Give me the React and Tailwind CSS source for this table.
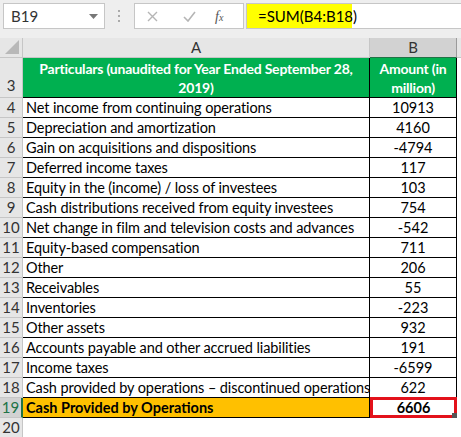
const rows = [
  [4, 'Net income from continuing operations', '10913'],
  [5, 'Depreciation and amortization', '4160'],
  [6, 'Gain on acquisitions and dispositions', '-4794'],
  [7, 'Deferred income taxes', '117'],
  [8, 'Equity in the (income) / loss of investees', '103'],
  [9, 'Cash distributions received from equity investees', '754'],
  [10, 'Net change in film and television costs and advances', '-542'],
  [11, 'Equity-based compensation', '711'],
  [12, 'Other', '206'],
  [13, 'Receivables', '55'],
  [14, 'Inventories', '-223'],
  [15, 'Other assets', '932'],
  [16, 'Accounts payable and other accrued liabilities', '191'],
  [17, 'Income taxes', '-6599'],
  [18, 'Cash provided by operations \u2013 discontinued operations', '622'],
];

const App = () => {
  return (
    <div
      className="w-[461px] h-[437px] overflow-hidden bg-white text-[14.5px] text-black"
      style={{ fontFamily: 'Lato, "Open Sans", sans-serif' }}
    >
      {/* formula bar */}
      <div className="h-[38px] bg-[#eeeeee] flex items-start pt-[3px]">
        <div className="ml-[3px] w-[102px] h-[26px] bg-white border border-[#c6c6c6] flex items-center justify-between pl-[7px] pr-[6px]">
          <span className="text-[15px] text-[#333]">B19</span>
          <svg width="9" height="5" viewBox="0 0 9 5"><path d="M0 0h9L4.5 5z" fill="#777" /></svg>
        </div>
        <div className="ml-[13px] mt-[7px] flex flex-col gap-[3px]">
          <div className="w-[2px] h-[2px] bg-[#aaa]" />
          <div className="w-[2px] h-[2px] bg-[#aaa]" />
          <div className="w-[2px] h-[2px] bg-[#aaa]" />
        </div>
        <div className="ml-[14px] w-[110px] h-[26px] bg-white border border-[#c6c6c6] flex items-center">
          <svg className="ml-[12px]" width="11" height="11" viewBox="0 0 11 11"><path d="M1 1l9 9M10 1l-9 9" stroke="#b5b5b5" strokeWidth="1.4" /></svg>
          <svg className="ml-[25px]" width="13" height="11" viewBox="0 0 13 11"><path d="M1 6l4 4 7-9" stroke="#b5b5b5" strokeWidth="1.6" fill="none" /></svg>
          <span className="ml-[19px] italic text-[14px] text-[#555]" style={{ fontFamily: '"Liberation Serif", serif' }}>f<span className="text-[10px]">x</span></span>
        </div>
        <div className="ml-[2px] flex-1 h-[26px] bg-white border border-[#c6c6c6] border-r-0 flex">
          <div className="w-[105px] h-full bg-[#ffff00] pl-[11px] flex items-center text-[15px]">=SUM(B4:B18)</div>
        </div>
      </div>

      {/* column headers */}
      <div className="flex h-[20px] bg-[#e6e6e6] text-[15px] text-[#333]">
        <div className="w-[23px] border-r border-b border-[#c6c6c6] relative">
          <svg className="absolute right-[3px] bottom-[3px]" width="14" height="14" viewBox="0 0 14 14"><path d="M14 0v14H0z" fill="#b8b8b8" /></svg>
        </div>
        <div className="w-[347px] border-r border-b border-[#c6c6c6] flex items-center justify-center">A</div>
        <div className="w-[87px] bg-[#d2d2d2] border-r border-b border-[#9b9b9b] border-b-[#217346] flex items-center justify-center">B</div>
        <div className="flex-1 border-b border-[#c6c6c6]" />
      </div>

      {/* header row 3 */}
      <div className="flex h-[40px]">
        <div className="w-[23px] bg-[#e6e6e6] border-r border-b border-[#c6c6c6] text-[15px] text-[#333] flex items-end justify-center pb-[1px]">3</div>
        <div className="w-[347px] bg-[#00b050] border-r border-b border-black text-white font-bold text-[14px] tracking-[-0.2px] text-center leading-[19px] pt-[1px]">
          Particulars (unaudited for Year Ended September 28, 2019)
        </div>
        <div className="w-[87px] bg-[#00b050] border-r border-b border-black text-white font-bold text-[14px] tracking-[-0.2px] text-center leading-[19px] pt-[1px]">
          Amount (in million)
        </div>
        <div className="flex-1" />
      </div>

      {rows.map(([n, label, amt]) => (
        <div key={n} className="flex h-[20px]">
          <div className="w-[23px] bg-[#e6e6e6] border-r border-b border-[#c6c6c6] text-[15px] text-[#333] flex items-center justify-center">{n}</div>
          <div className="w-[347px] border-r border-b border-black pl-[3px] flex items-center whitespace-nowrap tracking-[-0.1px]">{label}</div>
          <div className="w-[87px] border-r border-b border-black flex items-center justify-center">{amt}</div>
          <div className="flex-1" />
        </div>
      ))}

      {/* total row 19 */}
      <div className="flex h-[20px]">
        <div className="w-[23px] bg-[#d2d2d2] border-r-2 border-r-[#217346] border-b border-b-[#c6c6c6] text-[15px] text-[#217346] flex items-center justify-center">19</div>
        <div className="w-[347px] bg-[#ffc000] border-r border-b border-black pl-[3px] flex items-center font-bold whitespace-nowrap">Cash Provided by Operations</div>
        <div className="w-[87px] border-[3px] border-[#e3121b] -mt-[1px] h-[21px] flex items-center justify-center font-bold relative">
          6606
          <div className="absolute -right-[3px] -bottom-[3px] w-[5px] h-[5px] bg-[#555]" />
        </div>
        <div className="flex-1" />
      </div>

      {/* row 20 */}
      <div className="flex h-[20px]">
        <div className="w-[23px] bg-[#e6e6e6] border-r border-b border-[#c6c6c6] text-[15px] text-[#333] flex items-center justify-center">20</div>
        <div className="flex-1" />
      </div>
    </div>
  );
};

export default App;
